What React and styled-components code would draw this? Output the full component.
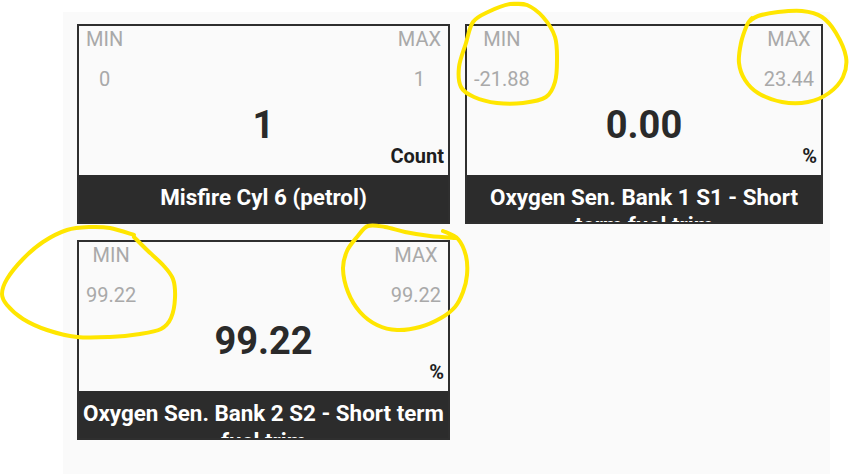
import React from "react";
import styled, { createGlobalStyle } from "styled-components";

const Global = createGlobalStyle`
  html, body { margin: 0; padding: 0; background: #ffffff; }
  body { font-family: Roboto, "Noto Sans", sans-serif; }
  * { box-sizing: border-box; }
`;

const Page = styled.div`
  position: relative;
  width: 851px;
  height: 474px;
  overflow: hidden;
  background: #ffffff;
  padding: 12px 0 0 63px;
`;

const Panel = styled.div`
  width: 767px;
  height: 462px;
  background: #fafafa;
  padding: 12px 14px;
`;

const Grid = styled.div`
  display: grid;
  grid-template-columns: 373px 358px;
  grid-auto-rows: 200px;
  column-gap: 15px;
  row-gap: 16px;
`;

const Card = styled.div`
  display: flex;
  flex-direction: column;
  border: 2px solid #2f2f2f;
  background: #fafafa;
  height: 200px;
  overflow: hidden;
`;

const Body = styled.div`
  flex: 1;
  display: flex;
  flex-direction: column;
  padding: 1px 7px 0;
`;

const StatsRow = styled.div`
  display: flex;
  justify-content: space-between;
  align-items: flex-start;
`;

const Stat = styled.div`
  display: flex;
  flex-direction: column;
  align-items: center;
  color: #a9a9a9;
  font-size: 20px;
  font-weight: 400;
  line-height: 24px;
`;

const StatValue = styled.div`
  margin-top: 16px;
`;

const MainValue = styled.div`
  margin-top: 14px;
  text-align: center;
  font-size: 38px;
  font-weight: 700;
  line-height: 40px;
  color: #2a2a2a;
`;

const Unit = styled.div`
  margin: -1px -3px 0 0;
  text-align: right;
  font-size: 20px;
  font-weight: 700;
  line-height: 24px;
  color: #1e1e1e;
`;

const Title = styled.div`
  height: 47px;
  flex: none;
  overflow: hidden;
  background: #2c2c2c;
  color: #ffffff;
  font-size: 22.4px;
  font-weight: 700;
  line-height: 28px;
  text-align: center;
  padding: 8px 0 0;
`;

const Overlay = styled.svg`
  position: absolute;
  left: 0;
  top: 0;
  pointer-events: none;
`;

const Mark = styled.path`
  fill: none;
  stroke: #ffe600;
  stroke-width: 4;
  stroke-linecap: round;
  stroke-linejoin: round;
`;

const smooth = (pts) => {
  let d = `M ${pts[0][0]} ${pts[0][1]}`;
  for (let i = 0; i < pts.length - 1; i++) {
    const p0 = pts[i - 1] || pts[i];
    const p1 = pts[i];
    const p2 = pts[i + 1];
    const p3 = pts[i + 2] || p2;
    const c1x = p1[0] + (p2[0] - p0[0]) / 6;
    const c1y = p1[1] + (p2[1] - p0[1]) / 6;
    const c2x = p2[0] - (p3[0] - p1[0]) / 6;
    const c2y = p2[1] - (p3[1] - p1[1]) / 6;
    d += ` C ${c1x.toFixed(1)} ${c1y.toFixed(1)} ${c2x.toFixed(1)} ${c2y.toFixed(1)} ${p2[0]} ${p2[1]}`;
  }
  return d;
};

const marks = [
  [
    [527, 5], [510, 4], [488, 12], [473, 22], [466, 43], [459, 67], [461, 87],
    [474, 97], [497, 103], [523, 103], [546, 97], [555, 82], [557, 60],
    [555, 37], [543, 17], [527, 5], [512, 4],
  ],
  [
    [750, 21], [758, 16], [778, 12], [802, 11], [822, 17], [836, 33],
    [846, 57], [843, 77], [829, 93], [808, 102], [782, 102], [758, 93],
    [745, 80], [739, 63], [741, 43], [747, 25], [752, 18],
  ],
  [
    [134, 235], [110, 228], [90, 227], [67, 230], [43, 242], [23, 259],
    [7, 279], [2, 294], [7, 305], [23, 319], [47, 330], [77, 337],
    [110, 337], [140, 334], [161, 329], [171, 318], [175, 298], [173, 279],
    [163, 265], [147, 250], [134, 237],
  ],
  [
    [443, 231], [458, 239], [466, 256], [467, 275], [463, 292], [455, 307],
    [441, 318], [420, 327], [397, 330], [377, 325], [360, 312], [348, 292],
    [343, 269], [347, 251], [357, 237], [368, 226], [385, 227], [405, 232],
    [430, 236], [455, 238],
  ],
];

const sensors = [
  { name: "Misfire Cyl 6 (petrol)", min: "0", max: "1", value: "1", unit: "Count" },
  {
    name: "Oxygen Sen. Bank 1 S1 - Short term fuel trim",
    min: "-21.88",
    max: "23.44",
    value: "0.00",
    unit: "%",
  },
  {
    name: "Oxygen Sen. Bank 2 S2 - Short term fuel trim",
    min: "99.22",
    max: "99.22",
    value: "99.22",
    unit: "%",
  },
];

const SensorCard = ({ s }) => (
  <Card>
    <Body>
      <StatsRow>
        <Stat>
          <div>MIN</div>
          <StatValue>{s.min}</StatValue>
        </Stat>
        <Stat>
          <div>MAX</div>
          <StatValue>{s.max}</StatValue>
        </Stat>
      </StatsRow>
      <MainValue>{s.value}</MainValue>
      <Unit>{s.unit}</Unit>
    </Body>
    <Title>{s.name}</Title>
  </Card>
);

export default function App() {
  return (
    <>
      <Global />
      <Page>
        <Panel>
          <Grid>
            {sensors.map((s) => (
              <SensorCard key={s.name} s={s} />
            ))}
          </Grid>
        </Panel>
        <Overlay width="851" height="474" viewBox="0 0 851 474">
          {marks.map((m, i) => (
            <Mark key={i} d={smooth(m)} />
          ))}
        </Overlay>
      </Page>
    </>
  );
}
